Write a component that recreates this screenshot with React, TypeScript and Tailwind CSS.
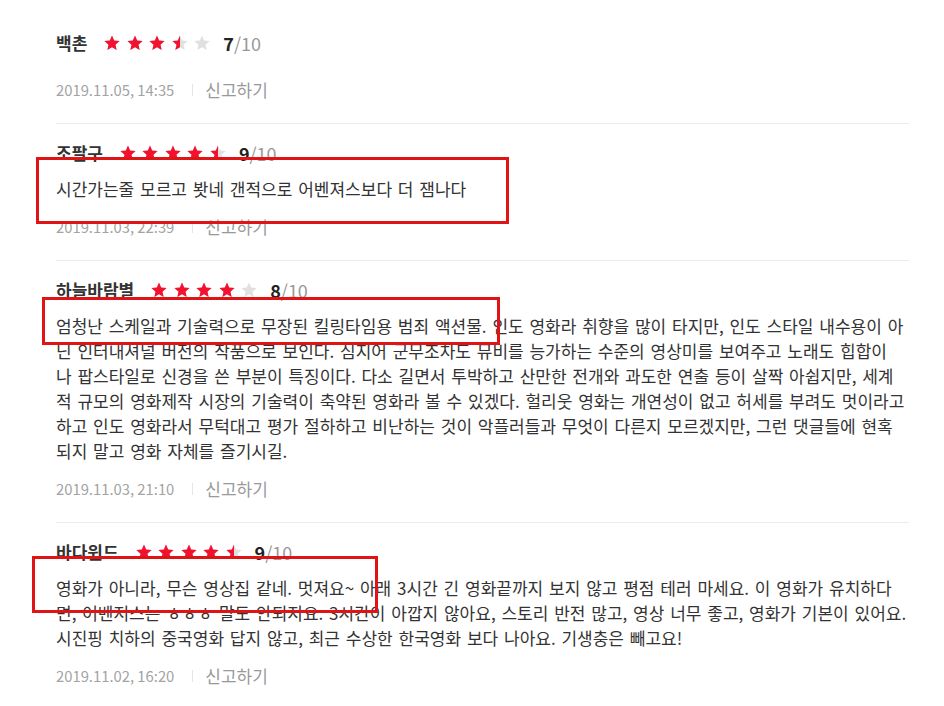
import React from "react";

type Review = {
    name: string;
    stars: number; // out of 5, halves allowed
    score: number;
    lines?: string[]; // body, split where the original wraps
    date: string;
    box?: string; // classes for the red annotation box, relative to the review item
};

const reviews: Review[] = [
    {
        name: "백촌",
        stars: 3.5,
        score: 7,
        date: "2019.11.05, 14:35",
    },
    {
        name: "조팔구",
        stars: 4.5,
        score: 9,
        lines: ["시간가는줄 모르고 봣네 갠적으로 어벤져스보다 더 잼나다"],
        date: "2019.11.03, 22:39",
        box: "left-[-20px] top-[33px] w-[473px] h-[67px]",
    },
    {
        name: "하늘바람별",
        stars: 4,
        score: 8,
        lines: [
            "엄청난 스케일과 기술력으로 무장된 킬링타임용 범죄 액션물. 인도 영화라 취향을 많이 타지만, 인도 스타일 내수용이 아",
            "닌 인터내셔널 버전의 작품으로 보인다. 심지어 군무조차도 뮤비를 능가하는 수준의 영상미를 보여주고 노래도 힙합이",
            "나 팝스타일로 신경을 쓴 부분이 특징이다. 다소 길면서 투박하고 산만한 전개와 과도한 연출 등이 살짝 아쉽지만, 세계",
            "적 규모의 영화제작 시장의 기술력이 축약된 영화라 볼 수 있겠다. 헐리웃 영화는 개연성이 없고 허세를 부려도 멋이라고",
            "하고 인도 영화라서 무턱대고 평가 절하하고 비난하는 것이 악플러들과 무엇이 다른지 모르겠지만, 그런 댓글들에 현혹",
            "되지 말고 영화 자체를 즐기시길.",
        ],
        date: "2019.11.03, 21:10",
        box: "left-[-14px] top-[36px] w-[458px] h-[48px]",
    },
    {
        name: "바다윈드",
        stars: 4.5,
        score: 9,
        lines: [
            "영화가 아니라, 무슨 영상집 같네. 멋져요~ 아래 3시간 긴 영화끝까지 보지 않고 평점 테러 마세요. 이 영화가 유치하다",
            "면, 어벤저스는 ㅎㅎㅎ 말도 안되지요. 3시간이 아깝지 않아요, 스토리 반전 많고, 영상 너무 좋고, 영화가 기본이 있어요.",
            "시진핑 치하의 중국영화 답지 않고, 최근 수상한 한국영화 보다 나아요. 기생충은 빼고요!",
        ],
        date: "2019.11.02, 16:20",
        box: "left-[-24px] top-[33px] w-[346px] h-[57px]",
    },
];

function Star({ fill }: { fill: "full" | "half" | "empty" }) {
    const path = "M8 0.6l2.2 5 5.4 0.5-4.1 3.6 1.2 5.3L8 12.2 3.3 15l1.2-5.3L0.4 6.1l5.4-0.5z";
    return (
        <span className="relative inline-block h-[16px] w-[16px]">
            <svg viewBox="0 0 16 16" className="absolute inset-0 h-[16px] w-[16px]">
                <path d={path} fill="#e0e0e0" />
            </svg>
            {fill !== "empty" && (
                <span className={`absolute inset-y-0 left-0 overflow-hidden ${fill === "half" ? "w-[8px]" : "w-[16px]"}`}>
                    <svg viewBox="0 0 16 16" className="h-[16px] w-[16px]">
                        <path d={path} fill="#f2112f" />
                    </svg>
                </span>
            )}
        </span>
    );
}

function Stars({ value }: { value: number }) {
    return (
        <div className="flex items-center gap-[6.5px]">
            {[1, 2, 3, 4, 5].map((i) => (
                <Star key={i} fill={value >= i ? "full" : value >= i - 0.5 ? "half" : "empty"} />
            ))}
        </div>
    );
}

export default function App() {
    return (
        <div className="min-h-screen bg-white font-['Noto_Sans_CJK_KR','Noto_Sans',sans-serif] text-[#333]">
            <ul className="ml-[56px] w-[853px] pt-[14px]">
                {reviews.map((r) => (
                    <li key={r.name} className="relative border-b border-[#ececec] pb-[23px] pt-[17px]">
                        {/* Name + rating */}
                        <div className="flex h-[24px] items-center">
                            <span className="text-[17px] font-bold text-[#333]">{r.name}</span>
                            <div className="ml-[17px]">
                                <Stars value={r.stars} />
                            </div>
                            <span className="ml-[13px] text-[18px] leading-none">
                                <b className="font-bold text-[#222]">{r.score}</b>
                                <span className="text-[#999]">/10</span>
                            </span>
                        </div>

                        {/* Body */}
                        {r.lines && (
                            <p className="mt-[11px] text-[17px] leading-[25px] text-[#333] [word-spacing:2px]">
                                {r.lines.map((line, i) => (
                                    <span key={i} className="block whitespace-nowrap">{line}</span>
                                ))}
                            </p>
                        )}

                        {/* Date / report */}
                        <div className={`flex h-[20px] items-center text-[#a3a3a3] ${r.lines ? "mt-[16px]" : "mt-[25px]"}`}>
                            <span className="text-[14.8px]">{r.date}</span>
                            <span className="ml-[18px] mr-[12px] h-[12px] w-px bg-[#e5e5e5]" />
                            <a href="#" className="text-[17px] text-[#999]">신고하기</a>
                        </div>

                        {/* Red annotation box */}
                        {r.box && (
                            <div className={`pointer-events-none absolute border-[3px] border-[#e01414] ${r.box}`} />
                        )}
                    </li>
                ))}
            </ul>
        </div>
    );
}
